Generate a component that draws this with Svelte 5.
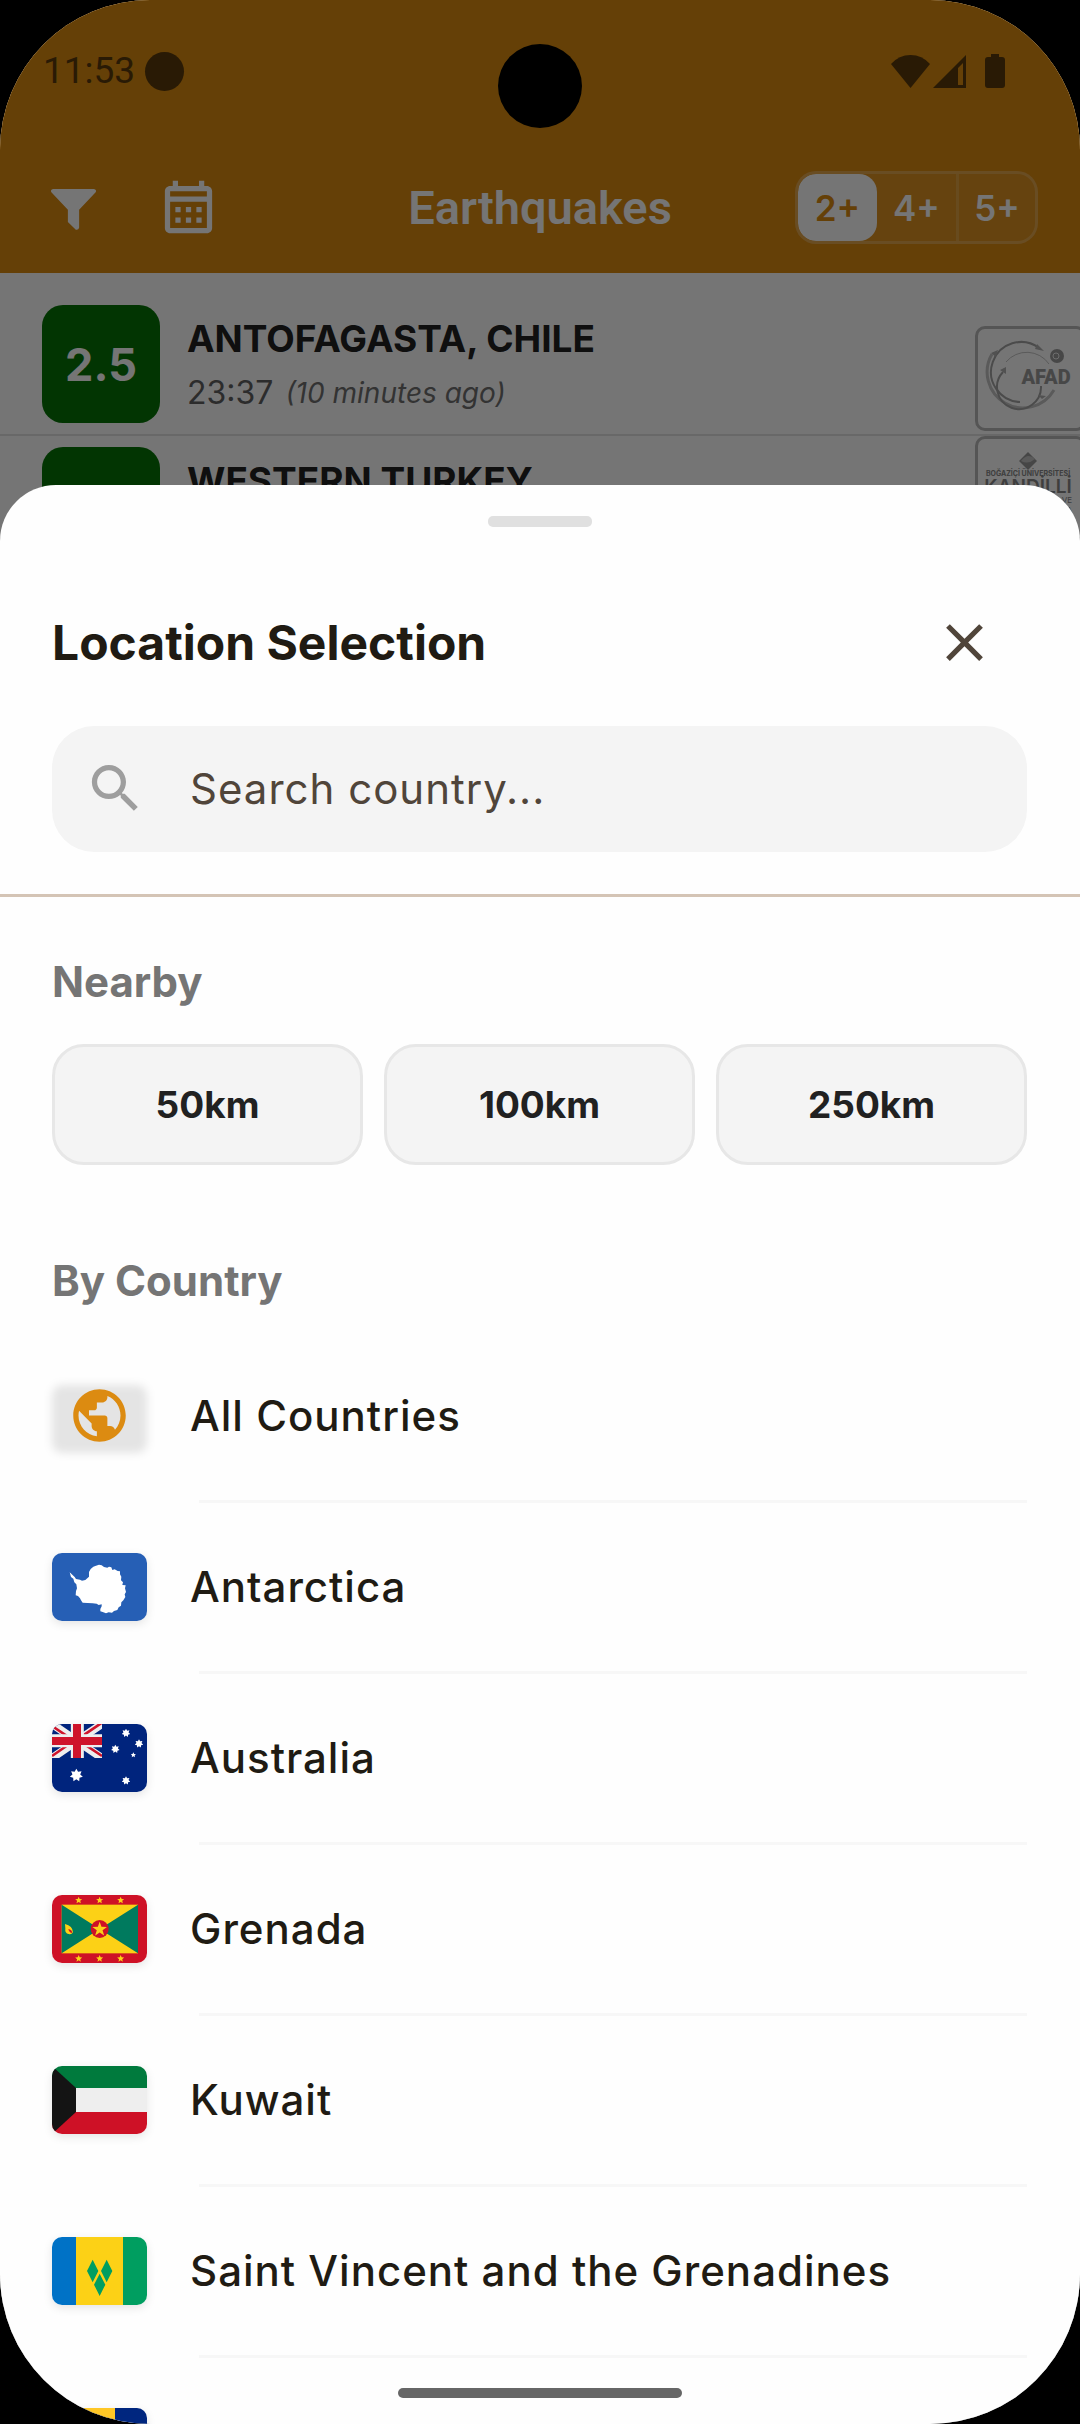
<script lang="ts">
    type Quake = { mag: string, place: string, time: string, ago: string };

    const quakes: Quake[] = [
        { mag: '2.5', place: 'ANTOFAGASTA, CHILE', time: '23:37', ago: '(10 minutes ago)' },
        { mag: '', place: 'WESTERN TURKEY', time: '', ago: '' }
    ];
    const magnitudes = ['2+', '4+', '5+'];
    const distances = ['50km', '100km', '250km'];
    const countries = [
        { code: 'all', name: 'All Countries' },
        { code: 'aq', name: 'Antarctica' },
        { code: 'au', name: 'Australia' },
        { code: 'gd', name: 'Grenada' },
        { code: 'kw', name: 'Kuwait' },
        { code: 'vc', name: 'Saint Vincent and the Grenadines' },
        { code: 'bb', name: '' }
    ];

    let minMagnitude = $state('2+');
    let query = $state('');
    let sheetOpen = $state(true);

    let shown = $derived(countries.filter((c) => c.name.toLowerCase().includes(query.toLowerCase())));

    function star(cx: number, cy: number, r: number, tips: number, inner: number) {
        const points: string[] = [];
        for (let i = 0; i < tips * 2; i++) {
            const len = i % 2 ? r * inner : r;
            const angle = (Math.PI * i) / tips - Math.PI / 2;
            points.push(`${(cx + len * Math.cos(angle)).toFixed(1)},${(cy + len * Math.sin(angle)).toFixed(1)}`);
        }
        return points.join(' ');
    }
</script>

<div class="screen">
    <header class="topbar">
        <div class="actions">
            <button aria-label="Filter">
                <svg class="funnel" viewBox="0 0 138 124"><path d="M7 0H131Q140 2 136 10L86 63V117Q84 125 76 123L52 100V63L2 10Q-2 2 7 0Z" /></svg>
            </button>
            <button aria-label="Calendar">
                <svg class="icon" viewBox="0 0 24 24"><path d="M7 11H9V13H7V11M21 5V19C21 20.11 20.11 21 19 21H5C3.89 21 3 20.1 3 19V5C3 3.9 3.9 3 5 3H6V1H8V3H16V1H18V3H19C20.11 3 21 3.9 21 5M5 5V7H19V5H5M19 19V9H5V19H19M15 13V11H17V13H15M11 13V11H13V13H11M7 15H9V17H7V15M15 17V15H17V17H15M11 17V15H13V17H11Z" /></svg>
            </button>
        </div>
        <h1>Earthquakes</h1>
        <div class="magnitudes">
            {#each magnitudes as m}
                <button class:active={m === minMagnitude} onclick={() => (minMagnitude = m)}>{m}</button>
            {/each}
        </div>
    </header>

    <main>
        <ul class="quakes">
            {#each quakes as quake}
                <li>
                    <span class="badge">{quake.mag}</span>
                    <div class="info">
                        <strong>{quake.place}</strong>
                        <p>{quake.time} <em>{quake.ago}</em></p>
                    </div>
                </li>
            {/each}
        </ul>
        <div class="sources">
            <div class="source">
                <svg viewBox="0 0 105 105" role="img" aria-label="AFAD">
                    <g fill="none">
                        <path d="M17 28A35 35 0 1 0 79 64" stroke="#c4c4c4" stroke-width="3" />
                        <path d="M64 22A30 30 0 1 0 45 76" stroke="#a4a4a4" stroke-width="2" />
                        <path d="M31 36A27 27 0 0 1 74 38" stroke="#c4c4c4" stroke-width="1" />
                        <path d="M28 46A22 22 0 1 0 66 60" stroke="#a4a4a4" stroke-width="2" />
                    </g>
                    <path d="M62 18L69 25L60 23ZM16 27L23 24L21 31ZM25 44L31 41L31 48ZM63 69L71 70L67 73Z" fill="#b0b0b0" />
                    <circle cx="82" cy="30" r="7" fill="#9c9c9c" />
                    <circle cx="81" cy="30" r="3" fill="none" stroke="#eee" stroke-width="1" />
                    <text class="afad" x="71" y="58" text-anchor="middle" fill="#9c9c9c">AFAD</text>
                </svg>
            </div>
            <div class="source">
                <svg viewBox="0 0 105 105" role="img" aria-label="Kandilli">
                    <path d="M53 16L62 25L53 34L44 25Z" fill="#999" />
                    <path d="M46 25Q53 16 60 23Q53 29 46 25Z" fill="#c4c4c4" />
                    <g fill="#888">
                        <text x="53" y="40" font-size="7" font-weight="700" text-anchor="middle">BOĞAZİÇİ ÜNİVERSİTESİ</text>
                        <text x="53" y="57" font-size="19" font-weight="600" text-anchor="middle">KANDİLLİ</text>
                        <text x="97" y="67" font-size="8" text-anchor="end">VE</text>
                        <text x="97" y="77" font-size="8" text-anchor="end">A</text>
                    </g>
                </svg>
            </div>
        </div>
    </main>

    {#if sheetOpen}
        <div class="scrim"></div>
        <section class="sheet">
            <div class="handle"></div>
            <div class="sheetHead">
                <div class="titleRow">
                    <h2>Location Selection</h2>
                    <button aria-label="Close" onclick={() => (sheetOpen = false)}>
                        <svg class="icon" viewBox="0 0 24 24"><path d="M19 6.41L17.59 5 12 10.59 6.41 5 5 6.41 10.59 12 5 17.59 6.41 19 12 13.41 17.59 19 19 17.59 13.41 12z" /></svg>
                    </button>
                </div>
                <label class="search">
                    <svg class="icon" viewBox="0 0 24 24"><path d="M15.5 14h-.79l-.28-.27C15.41 12.59 16 11.11 16 9.5 16 5.91 13.09 3 9.5 3S3 5.91 3 9.5 5.91 16 9.5 16c1.61 0 3.09-.59 4.23-1.57l.27.28v.79l5 4.99L20.49 19l-4.99-5zm-6 0C7.01 14 5 11.99 5 9.5S7.01 5 9.5 5 14 7.01 14 9.5 11.99 14 9.5 14z" /></svg>
                    <input type="text" placeholder="Search country..." aria-label="Search country" bind:value={query}>
                </label>
            </div>

            <div class="sheetBody">
                <h3>Nearby</h3>
                <div class="chips">
                    {#each distances as distance}
                        <button>{distance}</button>
                    {/each}
                </div>

                <h3>By Country</h3>
                <ul class="countries">
                    {#each shown as country}
                        <li>
                            <button>
                                <span class="flag" class:globe={country.code === 'all'}>
                                    {#if country.code === 'all'}
                                        <svg class="icon" viewBox="0 0 24 24"><path d="M12 2C6.48 2 2 6.48 2 12s4.48 10 10 10 10-4.48 10-10S17.52 2 12 2zm-1 17.93c-3.95-.49-7-3.85-7-7.93 0-.62.08-1.21.21-1.79L9 15v1c0 1.1.9 2 2 2v1.93zm6.9-2.54c-.26-.81-1-1.39-1.9-1.39h-1v-3c0-.55-.45-1-1-1H8v-2h2c.55 0 1-.45 1-1V7h2c1.1 0 2-.9 2-2v-.41c2.93 1.19 5 4.06 5 7.41 0 2.08-.8 3.97-2.1 5.39z" /></svg>
                                    {:else}
                                        <svg viewBox="0 0 285 204" preserveAspectRatio="none">
                                            {#if country.code === 'aq'}
                                                <rect width="285" height="204" fill="#265fb5" />
                                                <path fill="#fff" d="M53 58L68 72L72 78L84 80L90 83L100 81L111 71L111 57L116 48L124 41L132 38L141 35L149 37L156 42L166 44L171 41L178 43L181 51L188 49L197 54L204 55L204 64L208 71L207 82L213 88L211 96L221 97L219 106L222 117L218 124L220 132L214 142L208 148L207 158L200 163L196 171L186 174L180 179L170 178L162 181L152 177L145 175L145 168L149 160L149 154L140 156L134 152L122 151L92 149L87 142L84 136L78 129L71 127L72 114L75 106L73 94L67 88L64 77L57 72Z" />
                                            {:else if country.code === 'au'}
                                                <rect width="285" height="204" fill="#00247d" />
                                                <svg class="canton" width="150" height="102">
                                                    <path d="M0 0L150 102M150 0L0 102" stroke="#eee" stroke-width="24" />
                                                    <path d="M0 6L60 46M90 56L150 96M150 -4L85 40M65 51L0 96" stroke="#cf142b" stroke-width="8" />
                                                    <path d="M76 0V102M0 50H150" stroke="#eee" stroke-width="39" />
                                                    <path d="M75 0V102M0 51H150" stroke="#cf142b" stroke-width="24" />
                                                </svg>
                                                <g fill="#fff">
                                                    <polygon points={star(73, 154, 20, 7, 0.6)} />
                                                    <polygon points={star(222, 27, 13, 7, 0.6)} />
                                                    <polygon points={star(261, 59, 13, 7, 0.6)} />
                                                    <polygon points={star(190, 75, 13, 7, 0.6)} />
                                                    <polygon points={star(222, 170, 13, 7, 0.6)} />
                                                    <polygon points={star(244, 93, 8, 5, 0.5)} />
                                                </g>
                                            {:else if country.code === 'gd'}
                                                <rect width="285" height="204" fill="#ce1126" />
                                                <rect x="29" y="29" width="229" height="146" fill="#fcd116" />
                                                <path fill="#007a5e" d="M29 29L143 102L29 175ZM258 29L143 102L258 175Z" />
                                                <circle cx="143" cy="102" r="27" fill="#ce1126" />
                                                <path fill="#fcd116" d="M39 87Q62 92 63 112Q58 120 50 117Q38 116 40 100Z" />
                                                <path fill="#ce1126" d="M49 102Q60 104 61 114Q52 114 49 102Z" />
                                                <g fill="#fcd116">
                                                    <polygon points={star(143, 103, 23, 5, 0.4)} />
                                                    {#each [80, 143, 206] as x}
                                                        <polygon points={star(x, 16, 11, 5, 0.45)} />
                                                        <polygon points={star(x, 191, 11, 5, 0.45)} />
                                                    {/each}
                                                </g>
                                            {:else if country.code === 'kw'}
                                                <rect width="285" height="66" fill="#007a3d" />
                                                <rect y="66" width="285" height="72" fill="#eee" />
                                                <rect y="138" width="285" height="66" fill="#ce1126" />
                                                <path fill="#141414" d="M0 0L72 66V138L0 204Z" />
                                            {:else if country.code === 'vc'}
                                                <rect width="72" height="204" fill="#0072c6" />
                                                <rect x="72" width="141" height="204" fill="#fcd116" />
                                                <rect x="213" width="72" height="204" fill="#009e60" />
                                                <path fill="#009e60" d="M122 68L139 102L122 136L105 102ZM164 68L181 102L164 136L147 102ZM143 110L160 143L143 177L126 143Z" />
                                            {:else}
                                                <rect width="285" height="204" fill="#00267f" />
                                                <rect x="96" width="93" height="204" fill="#ffc726" />
                                            {/if}
                                        </svg>
                                    {/if}
                                </span>
                                <span class="name">{country.name}</span>
                            </button>
                        </li>
                    {/each}
                </ul>
            </div>
        </section>
    {/if}

    <div class="status">
        <div class="clock">11:53 <i></i></div>
        <div class="signals">
            <svg class="wifi" viewBox="0 0 39 33"><path d="M19.500 33L0 9Q8 0 19.500 0T39 9Z" /></svg>
            <svg class="cell" viewBox="0 0 33 33"><path fill-rule="evenodd" d="M0 33L33 0V33ZM25 13V30H30V8Z" /></svg>
            <svg class="battery" viewBox="0 0 20 34"><path d="M6 0H14V3H17Q20 3 20 6V31Q20 34 17 34H3Q0 34 0 31V6Q0 3 3 3H6Z" /></svg>
        </div>
    </div>
    <div class="camera"></div>
    <div class="homeBar"></div>
</div>

<style>
    :global(body) {
        margin: 0;
        background: #000;
    }

    .screen {
        position: relative;
        height: 100vh;
        overflow: hidden;
        border-radius: 150px;
        background: #fff;
        font-family: Inter, sans-serif;
        color: #212121;
    }

    button {
        display: flex;
        align-items: center;
        justify-content: center;
        padding: 0;
        border: none;
        background: none;
        font: inherit;
        color: inherit;
    }

    h1, h2, h3, p, ul {
        margin: 0;
        padding: 0;
    }

    ul {
        list-style: none;
    }

    svg {
        display: block;
        fill: currentColor;
    }

    .icon {
        width: 63px;
        height: 63px;
    }

    .topbar {
        display: grid;
        grid-template-columns: 1fr auto 1fr;
        align-items: center;
        height: 131px;
        padding: 142px 42px 0;
        background: #dc8b11;
        color: #fff;
    }

    .actions {
        display: flex;
        align-items: center;
        gap: 60px;
        padding: 4px 8px 0;
    }

    .funnel {
        width: 47px;
        height: 41px;
    }

    h1 {
        font: 600 47px/56px Roboto, sans-serif;
    }

    .magnitudes {
        display: flex;
        justify-self: end;
        height: 67px;
        overflow: hidden;
        border: 3px solid #ffffff40;
        border-radius: 21px;
        background: #ffffff12;
        background-clip: padding-box;
    }

    .magnitudes button {
        width: 79px;
        font-size: 35px;
        font-weight: 600;
    }

    .magnitudes button:last-child {
        border-left: 3px solid #ffffff26;
    }

    .magnitudes .active {
        border-radius: 18px;
        background: #fff;
        color: #dc8b11;
    }

    main {
        position: relative;
    }

    .quakes {
        padding-top: 21px;
    }

    .quakes li {
        display: flex;
        align-items: center;
        gap: 27px;
        height: 140px;
        padding: 0 42px;
        border-bottom: 2px solid #e2e2e2;
    }

    .badge {
        display: flex;
        align-items: center;
        justify-content: center;
        width: 118px;
        height: 118px;
        border-radius: 21px;
        background: #067306;
        color: #fff;
        font-size: 45px;
        font-weight: 700;
    }

    .info {
        display: flex;
        flex-direction: column;
        gap: 10px;
    }

    .info strong {
        font-size: 37px;
        font-weight: 700;
        line-height: 48px;
    }

    .info p {
        display: flex;
        gap: 12px;
        height: 40px;
        color: #616161;
        font-size: 32px;
        line-height: 40px;
    }

    .info em {
        color: #707070;
        font-size: 28px;
    }

    /* agency logos float over the right edge of the list */
    .sources {
        position: absolute;
        top: 53px;
        right: -6px;
        display: flex;
        flex-direction: column;
        gap: 5px;
    }

    .source {
        box-sizing: border-box;
        width: 111px;
        height: 105px;
        overflow: hidden;
        border: 3px solid #b9b9b9;
        border-radius: 10px;
    }

    .source svg {
        width: 105px;
        height: 105px;
        margin: -3px;
    }

    .afad {
        font: 900 20px Roboto, sans-serif;
    }

    .scrim {
        position: absolute;
        inset: 0;
        background: #0000008a;
    }

    .sheet {
        position: absolute;
        right: 0;
        bottom: 0;
        left: 0;
        display: flex;
        flex-direction: column;
        height: 80%;
        overflow: hidden;
        border-radius: 56px 56px 0 0;
        background: #fefefe;
    }

    .handle {
        flex: none;
        width: 104px;
        height: 11px;
        margin: 31px auto 0;
        border-radius: 5px;
        background: #e0e0e0;
    }

    .sheetHead {
        padding: 84px 53px 42px 52px;
        border-bottom: 3px solid #d4c4b5;
    }

    .titleRow {
        display: flex;
        align-items: center;
        justify-content: space-between;
        margin-bottom: 52px;
        color: #50453a;
    }

    .titleRow button {
        width: 126px;
    }

    h2 {
        color: #201b13;
        font-size: 48px;
        font-weight: 700;
        line-height: 63px;
    }

    .search {
        display: flex;
        align-items: center;
        gap: 43px;
        height: 126px;
        padding: 0 32px;
        border-radius: 42px;
        background: #f4f4f4;
        color: #9e9e9e;
    }

    .search input {
        flex: 1;
        min-width: 0;
        padding: 0;
        border: none;
        outline: none;
        background: none;
        color: #201b13;
        font: 400 42px/50px Inter, sans-serif;
        letter-spacing: 1px;
    }

    .search input::placeholder {
        color: #50453a;
        opacity: 1;
    }

    .sheetBody {
        flex: 1;
        min-height: 0;
        padding: 60px 53px 0 52px;
    }

    h3 {
        color: #757575;
        font-size: 42px;
        font-weight: 700;
        line-height: 50px;
    }

    .chips {
        display: grid;
        grid-template-columns: repeat(3, 1fr);
        gap: 21px;
        margin: 37px 0 91px;
    }

    .chips button {
        height: 121px;
        border: 3px solid #e7e7e7;
        border-radius: 32px;
        background: #f4f4f4;
        font-size: 37px;
        font-weight: 700;
    }

    .countries {
        padding-top: 26px;
    }

    .countries button {
        gap: 43px;
        height: 168px;
    }

    /* divider starts a little right of the names */
    .countries li::after {
        content: '';
        display: block;
        height: 3px;
        margin-left: 147px;
        background: #f7f7f7;
    }

    .flag {
        position: relative;
        width: 95px;
        height: 68px;
        border-radius: 10px;
        box-shadow: 0 3px 10px #0000001a;
    }

    .flag svg {
        width: 100%;
        height: 100%;
        border-radius: 10px;
    }

    .flag .canton {
        width: 150px;
        height: 102px;
        border-radius: 0;
    }

    .globe {
        display: flex;
        align-items: center;
        justify-content: center;
        box-shadow: none;
        color: #dc8b11;
    }

    .globe::before {
        content: '';
        position: absolute;
        inset: 3px 0 -3px;
        border-radius: 10px;
        background: #0000001a;
        filter: blur(4px);
    }

    .flag.globe svg {
        position: relative;
        width: 63px;
        height: 63px;
        border-radius: 0;
    }

    .name {
        color: #201b13;
        font-size: 42px;
        font-weight: 500;
        letter-spacing: 1px;
    }

    .status {
        position: absolute;
        top: 0;
        right: 0;
        left: 0;
        display: flex;
        align-items: center;
        justify-content: space-between;
        height: 142px;
        padding: 0 75px 0 43px;
        color: #291a05;
    }

    .clock {
        display: flex;
        align-items: center;
        gap: 10px;
        font: 400 37px/40px Roboto, sans-serif;
    }

    .clock i {
        width: 39px;
        height: 39px;
        border-radius: 50%;
        background: #291a05;
    }

    .signals {
        display: flex;
        align-items: center;
    }

    .wifi {
        width: 39px;
        height: 33px;
    }

    .cell {
        width: 33px;
        height: 33px;
        margin: 0 19px 0 3px;
    }

    .battery {
        width: 20px;
        height: 34px;
    }

    .camera {
        position: absolute;
        top: 44px;
        left: 50%;
        width: 84px;
        height: 84px;
        margin-left: -42px;
        border-radius: 50%;
        background: #000;
    }

    .homeBar {
        position: absolute;
        bottom: 26px;
        left: 50%;
        width: 284px;
        height: 10px;
        margin-left: -142px;
        border-radius: 5px;
        background: #666;
    }
</style>
